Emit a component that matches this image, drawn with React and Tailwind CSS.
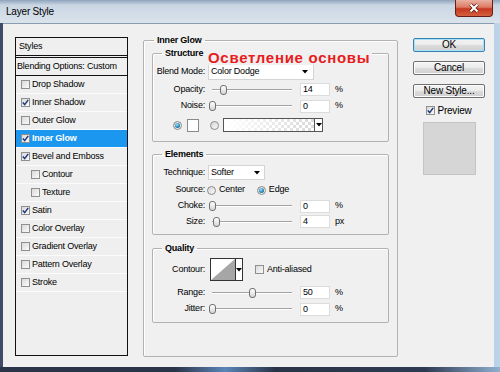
import * as React from 'react';

const styleRows = [
  { label: 'Drop Shadow' },
  { label: 'Inner Shadow', checked: true },
  { label: 'Outer Glow' },
  { label: 'Inner Glow', checked: true, active: true },
  { label: 'Bevel and Emboss', checked: true },
  { label: 'Contour', sub: true },
  { label: 'Texture', sub: true },
  { label: 'Satin', checked: true },
  { label: 'Color Overlay' },
  { label: 'Gradient Overlay' },
  { label: 'Pattern Overlay' },
  { label: 'Stroke' },
];

function Check({ checked, className = '' }) {
  return (
    <span
      className={`w-[9px] h-[9px] shrink-0 border border-[#8e8f8f] bg-[linear-gradient(135deg,#d9d9d9,#fbfbfb)] flex items-center justify-center ${className}`}
    >
      {checked && (
        <svg width="7" height="7" viewBox="0 0 7 7">
          <path d="M0.8 3.6 L2.7 5.6 L6.2 0.9" fill="none" stroke="#1f3a7a" strokeWidth="1.5" />
        </svg>
      )}
    </span>
  );
}

function Radio({ on, className = '' }) {
  return (
    <span
      className={`w-[9px] h-[9px] shrink-0 rounded-full border border-[#8a8a8a] bg-[linear-gradient(135deg,#d6d6d6,#fafafa)] flex items-center justify-center ${className}`}
    >
      {on && (
        <span className="w-[5px] h-[5px] rounded-full bg-[radial-gradient(circle_at_40%_35%,#9fe3ff,#1f7fb0_60%,#0d4a6e)]" />
      )}
    </span>
  );
}

function Arrow() {
  return (
    <svg width="6" height="4" viewBox="0 0 6 4" className="shrink-0">
      <polygon points="0,0 6,0 3,3.5" fill="#000" />
    </svg>
  );
}

function Label({ children }) {
  return <span className="w-[52px] shrink-0 text-right whitespace-nowrap">{children}</span>;
}

function Slider({ pct }) {
  return (
    <div className="relative w-[88px] h-[12px] ml-[3px] shrink-0">
      <div className="absolute left-[4px] right-[4px] top-[5px] h-[2px] border-t border-[#a3a3a3] border-b border-b-white" />
      <div
        className="absolute top-[1px] w-[7px] h-[10px] rounded-[3px] border border-[#707070] bg-[linear-gradient(#ffffff,#d4d4d4)]"
        style={{ left: 4 + pct * 0.8 - 3.5 }}
      />
    </div>
  );
}

function NumBox({ value }) {
  return (
    <div className="ml-[4px] w-[30px] h-[13px] shrink-0 bg-white border border-[#dcdcdc] pl-[2px] flex items-center leading-none">
      {value}
    </div>
  );
}

function SliderRow({ label, pct, value, unit, className = '' }) {
  return (
    <div className={`flex items-center h-[15px] ${className}`}>
      <Label>{label}</Label>
      <Slider pct={pct} />
      <NumBox value={value} />
      <span className="ml-[5px]">{unit}</span>
    </div>
  );
}

function Group({ title, className = '', children, legendClass = 'ml-[9px]' }) {
  return (
    <fieldset
      className={`border border-[#b2b2b2] rounded-[2px] shadow-[inset_1px_1px_0_#ffffff] shrink-0 ${className}`}
    >
      <legend className={`${legendClass} px-[3px] font-bold leading-[11px]`}>{title}</legend>
      {children}
    </fieldset>
  );
}

function Button({ children, primary }) {
  return (
    <div
      className={`w-[72px] h-[14px] rounded-[2px] border flex items-center justify-center text-[10px] leading-none bg-[linear-gradient(#f4f4f4_0%,#ebebeb_48%,#dcdcdc_52%,#cfcfcf_100%)] ${
        primary
          ? 'border-[#3c7fb1] shadow-[inset_0_0_0_1px_#a6e2fa]'
          : 'border-[#707070] shadow-[inset_0_0_0_1px_#fbfbfb]'
      }`}
    >
      {children}
    </div>
  );
}

function CloseButton() {
  return (
    <div className="mr-[7px] w-[38px] h-[17px] rounded-b-[4px] border border-t-0 border-[#6a1d12] bg-[linear-gradient(#eab0a2_0%,#dc7a64_45%,#c5381f_55%,#d4603f_100%)] flex items-center justify-center">
      <svg width="12" height="10" viewBox="0 0 12 10">
        <path d="M2.5 1.5 L9.5 8.5 M9.5 1.5 L2.5 8.5" stroke="#5a1a10" strokeWidth="3.6" />
        <path d="M2.5 1.5 L9.5 8.5 M9.5 1.5 L2.5 8.5" stroke="#ffffff" strokeWidth="2.1" />
      </svg>
    </div>
  );
}

export default function App() {
  return (
    <div className="w-[500px] h-[372px] flex flex-col overflow-hidden bg-[linear-gradient(90deg,#3f4c68_0%,#5a6b8b_40%,#93b2d1_80%,#bcd4ea_100%)] font-['Liberation_Sans',Arial,sans-serif] text-[9px] tracking-[-0.2px] text-black">
      <div className="h-[23px] shrink-0 flex items-start justify-between bg-[linear-gradient(180deg,#8ea3bb_0%,#c9d6e3_22%,#dae3ec_100%)]">
        <span className="ml-[6px] mt-[6px] text-[10px] leading-[12px]">Layer Style</span>
        <CloseButton />
      </div>

      <div className="flex-1 flex pl-[3px] pr-[6px]">
        <div className="flex-1 relative bg-[#f0f0f0] border-t border-[#8b9bb0] flex items-start pl-[12px] pt-[11px]">
          {/* styles list */}
          <div className="mt-[2px] w-[113px] h-[319px] shrink-0 border border-[#111] bg-[#efefef] flex flex-col">
            <div className="h-[18px] flex items-center pl-[3px] border-b border-[#111]">Styles</div>
            <div className="h-[1px]" />
            <div className="h-[19px] flex items-center pl-[1px] border-t border-b border-[#111] whitespace-nowrap">
              Blending Options: Custom
            </div>
            {styleRows.map((r) => (
              <div
                key={r.label}
                className={`h-[18px] flex items-center border-b border-[#fbfbfb] whitespace-nowrap ${
                  r.sub ? 'pl-[15px]' : 'pl-[5px]'
                } ${r.active ? 'bg-[#1c97ef] text-white font-bold' : ''}`}
              >
                <Check checked={r.checked} />
                <span className="ml-[2px]">{r.label}</span>
              </div>
            ))}
          </div>

          {/* Inner Glow options */}
          <Group title="Inner Glow" legendClass="ml-[10px]" className="ml-[15px] w-[255px] h-[322px]">
            <div className="px-[8px] pt-[1.5px] flex flex-col">
              <Group title="Structure" className="w-[237px] h-[94px]">
                <div className="flex flex-col">
                  <div className="flex items-center h-[16px] mt-[5.5px]">
                    <Label>Blend Mode:</Label>
                    <div className="ml-[3px] w-[106px] h-[16px] bg-white border border-[#d4d4d4] flex items-center justify-between pl-[2px] pr-[5px]">
                      <span>Color Dodge</span>
                      <Arrow />
                    </div>
                  </div>
                  <SliderRow label="Opacity:" pct={14} value="14" unit="%" className="mt-[2px]" />
                  <SliderRow label="Noise:" pct={0} value="0" unit="%" className="mt-[1.5px]" />
                  <div className="flex items-center h-[14px] mt-[4.5px]">
                    <Radio on className="ml-[20px]" />
                    <div className="ml-[5px] w-[12px] h-[13px] bg-white border border-[#8a8a8a]" />
                    <Radio className="ml-[11px]" />
                    <div className="ml-[4px] w-[100px] h-[14px] flex border border-[#555]">
                      <div className="flex-1 bg-[linear-gradient(90deg,#ffffff_0%,rgba(255,255,255,0.2)_100%),repeating-conic-gradient(#d0d0d0_0_25%,#ffffff_0_50%)] [background-size:100%_100%,6px_6px]" />
                      <div className="w-[8px] border-l border-[#555] bg-white flex items-center justify-center">
                        <Arrow />
                      </div>
                    </div>
                  </div>
                </div>
              </Group>

              <Group title="Elements" className="mt-[7px] w-[237px] h-[86px]">
                <div className="flex flex-col">
                  <div className="flex items-center h-[15px] mt-[5.5px]">
                    <Label>Technique:</Label>
                    <div className="ml-[3px] w-[57px] h-[15px] bg-white border border-[#d4d4d4] flex items-center justify-between pl-[2px] pr-[4px]">
                      <span>Softer</span>
                      <Arrow />
                    </div>
                  </div>
                  <div className="flex items-center h-[15px] mt-[2.5px]">
                    <Label>Source:</Label>
                    <Radio className="ml-[2px]" />
                    <span className="ml-[3px]">Center</span>
                    <Radio on className="ml-[12px]" />
                    <span className="ml-[3px]">Edge</span>
                  </div>
                  <SliderRow label="Choke:" pct={0} value="0" unit="%" className="mt-[1px]" />
                  <SliderRow label="Size:" pct={5} value="4" unit="px" className="mt-[0.5px]" />
                </div>
              </Group>

              <Group title="Quality" className="mt-[8px] w-[237px] h-[80px]">
                <div className="flex flex-col">
                  <div className="flex items-center h-[23px] mt-[4.5px]">
                    <Label>Contour:</Label>
                    <div className="ml-[5px] w-[33px] h-[23px] flex border border-[#333] bg-white">
                      <svg width="24" height="21" viewBox="0 0 24 21" className="shrink-0">
                        <polygon points="0,21 24,0 24,21" fill="#a6a6a6" />
                      </svg>
                      <div className="flex-1 border-l border-[#333] flex items-center justify-center">
                        <Arrow />
                      </div>
                    </div>
                    <Check className="ml-[12px]" />
                    <span className="ml-[3px]">Anti-aliased</span>
                  </div>
                  <SliderRow label="Range:" pct={50} value="50" unit="%" className="mt-[4px]" />
                  <SliderRow label="Jitter:" pct={0} value="0" unit="%" className="mt-[1.5px]" />
                </div>
              </Group>
            </div>
          </Group>

          {/* buttons */}
          <div className="ml-[15px] mt-[3px] w-[72px] shrink-0 flex flex-col items-center">
            <Button primary>OK</Button>
            <div className="mt-[9px]">
              <Button>Cancel</Button>
            </div>
            <div className="mt-[9px]">
              <Button>New Style...</Button>
            </div>
            <div className="mt-[8px] h-[9px] flex items-center">
              <Check checked />
              <span className="ml-[2px] text-[10px] leading-none">Preview</span>
            </div>
            <div className="mt-[7px] w-[53px] h-[53px] bg-[#d6d6d6] border border-[#c4c4c4]" />
          </div>

          {/* red annotation over the structure frame */}
          <span className="absolute left-[203px] top-[26px] px-[2px] bg-[#f0f0f0] text-[15px] leading-[15px] font-bold tracking-[0.7px] text-[#e81c1c] whitespace-nowrap">
            Осветление основы
          </span>
        </div>
      </div>

      <div className="h-[5px] shrink-0 bg-[linear-gradient(90deg,#2b3449_0%,#2a3448_35%,#5b86b8_45%,#2a3448_55%,#2e3a52_85%,#8fb0d0_100%)]" />
    </div>
  );
}
